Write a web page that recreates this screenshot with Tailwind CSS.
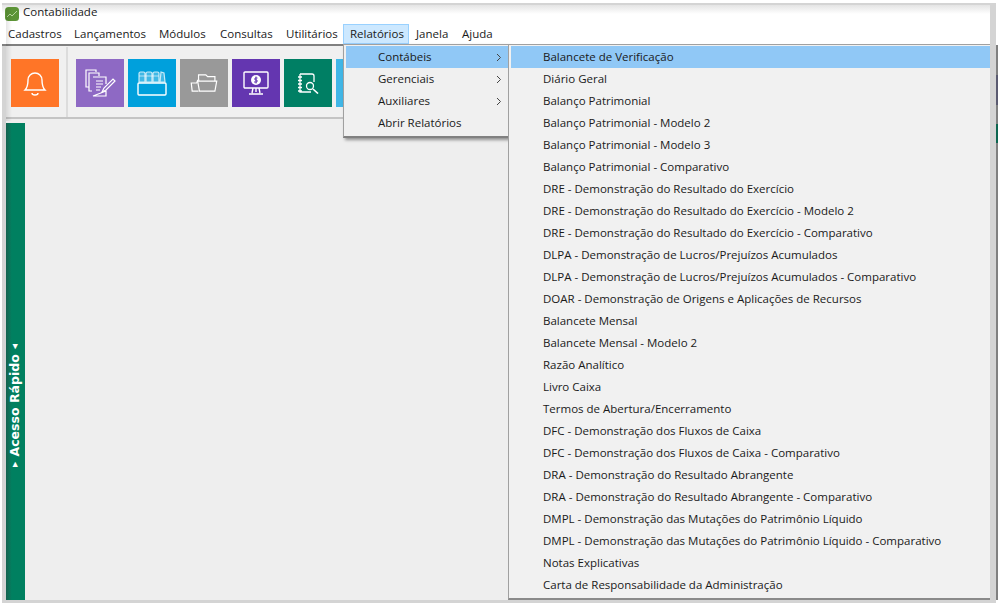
<!doctype html>
<html>

<head>
    <meta charset="UTF-8">
    <script src="https://cdn.jsdelivr.net/npm/@tailwindcss/browser@4"></script>
    <title>Contabilidade</title>
</head>

<body class="bg-white font-['Open_Sans','Liberation_Sans',sans-serif] text-[11.5px] text-[#1a1a1a] overflow-hidden">
    <div class="relative w-[1008px] h-[609px] pt-[3px] pl-[2px]">
        <!-- window -->
        <div class="relative w-[994px] h-[600px] flex flex-col bg-[#d4d4d4] pl-[4px] pr-[6px] pb-[3px] pt-[2px]">
            <div class="h-[18px] bg-gradient-to-b from-[#e4e4e4] via-white via-50% to-white flex items-start -ml-[4px] pl-[3px] gap-[4px] shrink-0 leading-[14px]">
                <svg class="mt-[2px]" width="14" height="14" viewBox="0 0 14 14">
                    <rect x="0" y="0" width="14" height="14" rx="3.500" fill="#5c9436" />
                    <path d="M2 10l3-3 2 2 5-5" fill="none" stroke="#b8d8a0" stroke-width="1" />
                </svg>
                <span>Contabilidade</span>
            </div>
            <div class="h-[21px] bg-white flex items-center -ml-[4px] pl-[6px] gap-[14px] shrink-0 leading-none box-content border-b-2 border-[#808080]">
                <span class="w-[52px]">Cadastros</span>
                <span class="w-[71px]">Lançamentos</span>
                <span class="w-[47px]">Módulos</span>
                <span class="w-[52px]">Consultas</span>
                <span class="w-[50px]">Utilitários</span>
                <span class="w-[66px] h-[20px] -mx-[7px] mt-[1px] pl-[6px] bg-[#cce8ff] border border-[#99d1ff] flex items-center">Relatórios</span>
                <span class="w-[32px]">Janela</span>
                <span class="w-[31px]">Ajuda</span>
            </div>
            <div class="h-[73px] bg-[#f0f0f0] border-b-2 border-[#c4c4c4] flex items-center shrink-0 gap-[4px] pl-[5px] pt-[3px]">
                <div class="w-[48px] h-[48px] bg-[#ff7527] flex items-center justify-center mr-[3px]">
                    <svg width="24" height="28" viewBox="0 0 24 28" fill="none" stroke="white" stroke-width="1.4">
                        <path d="M2 21c3-3 3-6 3-10a7 7 0 0 1 14 0c0 4 0 7 3 10z" />
                        <path d="M9 24a3 2 0 0 0 6 0" />
                    </svg>
                </div>
                <div class="w-[2px] h-[70px] bg-[#dcdcdc] mr-[4px] -mt-[3px]"></div>
                <div class="w-[48px] h-[48px] bg-[#8e69c4] flex items-center justify-center">
                    <svg width="34" height="30" viewBox="0 0 34 30" fill="none" stroke="white" stroke-width="1.2">
                        <path d="M6 19H3V2h10v2" />
                        <path d="M9 23H6V5h10v3" />
                        <path d="M10 9h13v7M23 23v5H10z" />
                        <path d="M13 13h7M13 16h7M13 19h5M13 22h4" />
                        <path d="M19 24l2-4 9-9 2 2-9 9z" />
                    </svg>
                </div>
                <div class="w-[48px] h-[48px] bg-[#00a0dc] flex items-center justify-center">
                    <svg width="30" height="25" viewBox="0 0 30 25" fill="none" stroke="white" stroke-width="1.200">
                        <path d="M2 11V2.500a1.500 1.500 0 0 1 1.500-1.500h3a1.500 1.500 0 0 1 1.500 1.500V11zM9 11V2.500a1.500 1.500 0 0 1 1.500-1.500h3a1.500 1.500 0 0 1 1.500 1.500V11zM16 11V2.500a1.500 1.500 0 0 1 1.500-1.500h3a1.500 1.500 0 0 1 1.500 1.500V11zM23 11l1-10 3 1 1 9z" fill="white" fill-opacity=".25" stroke-opacity=".75" />
                        <path d="M2 5h20" stroke-opacity=".5" />
                        <rect x="1" y="12" width="28" height="12" rx="1" stroke-width="1.400" />
                    </svg>
                </div>
                <div class="w-[48px] h-[48px] bg-[#999999] flex items-center justify-center">
                    <svg width="28" height="20" viewBox="0 0 30 22" fill="none" stroke="white" stroke-width="1.3">
                        <path d="M9 20H2l-1-9h6l1-3h2" />
                        <path d="M9 8V2h8l2 2h8v5" />
                        <path d="M10 20L8 9h21l-2 11z" />
                    </svg>
                </div>
                <div class="w-[48px] h-[48px] bg-[#6436b0] flex items-center justify-center">
                    <svg width="28" height="26" viewBox="0 0 28 26" fill="none" stroke="white" stroke-width="1.4">
                        <rect x="2" y="2" width="24" height="16" rx="1" />
                        <path d="M14 18v4M7 24h14M10 23l1-5M18 23l-1-5" />
                        <circle cx="14" cy="10" r="5" fill="white" stroke="none" />
                        <path d="M15.500 8h-2.500v2h2v2h-3M14 6.500v7" stroke="#6436b0" stroke-width="1" />
                    </svg>
                </div>
                <div class="w-[48px] h-[48px] bg-[#007f64] flex items-center justify-center">
                    <svg width="22" height="21" viewBox="0 0 22 21" fill="none" stroke="white" stroke-width="1.300">
                        <path d="M3 1h12a2 2 0 0 1 2 2v6M3 1v18h11" />
                        <path d="M1 4h4M1 7.500h4M1 11h4M1 14.500h4M1 18h4" />
                        <circle cx="13" cy="13" r="3.500" />
                        <path d="M16 16l5 4.500" stroke-width="1.600" />
                    </svg>
                </div>
                <div class="w-[48px] h-[48px] bg-[#41b6e6]"></div>
            </div>
            <div class="flex-1 bg-[#eeeeee] pt-[4px] flex min-h-0">
                <div class="w-[19px] bg-gradient-to-r from-[#14614f] via-[#008060] via-30% to-[#008060] flex items-center justify-center pt-[88px]">
                    <span class="-rotate-90 whitespace-nowrap text-white font-bold text-[12.5px] font-['DejaVu_Sans',sans-serif] flex items-center gap-[5px]">
                        <span class="text-[7px]">▶</span>Acesso Rápido<span class="text-[7px]">◀</span>
                    </span>
                </div>
            </div>
            <div class="absolute left-[4px] top-[5px] w-[6px] h-[113px] bg-gradient-to-r from-black/10 to-transparent"></div>
        </div>

        <!-- edge of the window behind -->
        <div class="absolute left-[996px] top-[45px] w-[2px] h-[555px] bg-[#808080] flex flex-col">
            <div class="h-[30px] mt-[30px] bg-[#5a5a70]"></div>
            <div class="h-[19px] mt-[19px] bg-[#0d6650]"></div>
        </div>

        <!-- first dropdown -->
        <div class="absolute left-[343px] top-[44px] w-[166px] h-[94px] bg-[#f0f0f0] border-l border-t border-[#a0a0a0] border-b-2 border-b-[#808080] pl-[2px] pr-[1px] pt-[1px] shadow-[2px_2px_3px_rgba(0,0,0,0.4)]">
            <div class="h-[22px] bg-[#90c8f6] flex items-center pl-[32px] justify-between pr-[6px]">Contábeis<svg width="6" height="9" viewBox="0 0 6 9" fill="none" stroke="#444" stroke-width="1"><path d="M1 1l3.500 3.500L1 8" /></svg></div>
            <div class="h-[22px] flex items-center pl-[32px] justify-between pr-[6px]">Gerenciais<svg width="6" height="9" viewBox="0 0 6 9" fill="none" stroke="#444" stroke-width="1"><path d="M1 1l3.500 3.500L1 8" /></svg></div>
            <div class="h-[22px] flex items-center pl-[32px] justify-between pr-[6px]">Auxiliares<svg width="6" height="9" viewBox="0 0 6 9" fill="none" stroke="#444" stroke-width="1"><path d="M1 1l3.500 3.500L1 8" /></svg></div>
            <div class="h-[22px] flex items-center pl-[32px]">Abrir Relatórios</div>
        </div>

        <!-- second dropdown -->
        <div class="absolute left-[508px] top-[44px] w-[482px] h-[556px] bg-[#f1f1f1] border-l border-t border-[#a0a0a0] border-b-2 border-b-[#8a8a8a] pl-[2px] pt-[1px] [&>div]:h-[22px] [&>div]:flex [&>div]:items-center [&>div]:pl-[32px] [&>div]:whitespace-nowrap">
            <div class="bg-[#90c8f6]">Balancete de Verificação</div>
            <div>Diário Geral</div>
            <div>Balanço Patrimonial</div>
            <div>Balanço Patrimonial - Modelo 2</div>
            <div>Balanço Patrimonial - Modelo 3</div>
            <div>Balanço Patrimonial - Comparativo</div>
            <div>DRE - Demonstração do Resultado do Exercício</div>
            <div>DRE - Demonstração do Resultado do Exercício - Modelo 2</div>
            <div>DRE - Demonstração do Resultado do Exercício - Comparativo</div>
            <div>DLPA - Demonstração de Lucros/Prejuízos Acumulados</div>
            <div>DLPA - Demonstração de Lucros/Prejuízos Acumulados - Comparativo</div>
            <div>DOAR - Demonstração de Origens e Aplicações de Recursos</div>
            <div>Balancete Mensal</div>
            <div>Balancete Mensal - Modelo 2</div>
            <div>Razão Analítico</div>
            <div>Livro Caixa</div>
            <div>Termos de Abertura/Encerramento</div>
            <div>DFC - Demonstração dos Fluxos de Caixa</div>
            <div>DFC - Demonstração dos Fluxos de Caixa - Comparativo</div>
            <div>DRA - Demonstração do Resultado Abrangente</div>
            <div>DRA - Demonstração do Resultado Abrangente - Comparativo</div>
            <div>DMPL - Demonstração das Mutações do Patrimônio Líquido</div>
            <div>DMPL - Demonstração das Mutações do Patrimônio Líquido - Comparativo</div>
            <div>Notas Explicativas</div>
            <div>Carta de Responsabilidade da Administração</div>
        </div>
    </div>
</body>

</html>
